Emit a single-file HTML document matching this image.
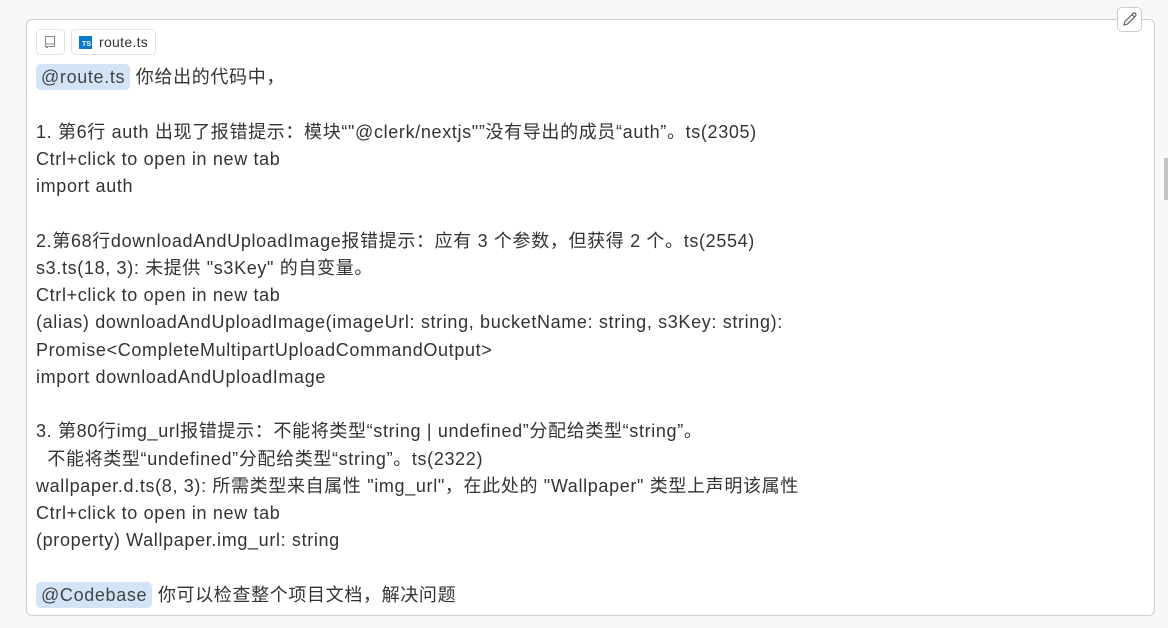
<!DOCTYPE html>
<html><head><meta charset="utf-8"><style>
html,body{margin:0;padding:0;width:1168px;height:628px;background:#f8f8f8;overflow:hidden}
.box{position:absolute;left:26px;top:19px;width:1129px;height:597px;background:#fff;border:1px solid #cfcfcf;border-radius:6px;box-sizing:border-box}
.btn{position:absolute;top:29px;height:26px;border:1px solid #e3e3e3;border-radius:4px;background:#fff;box-sizing:border-box}
.txt{position:absolute;left:36px;top:64px;font-family:"Liberation Sans","Noto Sans CJK SC",sans-serif;font-size:18px;line-height:27.25px;color:#333;white-space:pre;letter-spacing:0.65px}
.tag{background:#d4e4f8;border-radius:5px;padding:3px 5px;color:#444}
.edit{position:absolute;left:1117px;top:7px;width:25px;height:25px;border:1px solid #ccc;border-radius:5px;background:#fff;box-sizing:border-box}
.sb{position:absolute;left:1164px;top:158px;width:4px;height:42px;background:#c4c4c4}
</style></head><body>
<div class="box"></div>
<div class="btn" style="left:36px;width:29px"><svg width="27" height="24" viewBox="0 0 27 24"><rect x="8.5" y="6.5" width="9" height="10" fill="none" stroke="#888"/><line x1="8.5" y1="14" x2="17.5" y2="14" stroke="#888"/><rect x="9" y="16" width="2" height="2" fill="#888"/></svg></div>
<div class="btn" style="left:71px;width:85px"><div style="position:absolute;left:7px;top:6px;width:13px;height:13px;background:#0a7acc;color:#fff;font:bold 7px 'Liberation Sans',sans-serif;line-height:17px;text-align:right;padding-right:1px;box-sizing:border-box">TS</div><span style="position:absolute;left:27px;top:4px;font:14px 'Liberation Sans',sans-serif;color:#333;letter-spacing:0.3px">route.ts</span></div>
<div class="edit"><svg width="23" height="23" viewBox="0 0 23 23"><path d="M6 17 L7 13.5 L15 5.5 Q16.5 4.5 17.5 5.5 Q18.5 6.5 17.5 8 L9.5 16 Z M14 6.5 L16.5 9" fill="none" stroke="#555" stroke-width="1.1"/></svg></div>
<div class="sb"></div>
<div class="txt"><span class="tag">@route.ts</span> 你给出的代码中，

1. 第6行 auth 出现了报错提示：模块“"@clerk/nextjs"”没有导出的成员“auth”。ts(2305)
Ctrl+click to open in new tab
import auth

2.第68行downloadAndUploadImage报错提示：应有 3 个参数，但获得 2 个。ts(2554)
s3.ts(18, 3): 未提供 "s3Key" 的自变量。
Ctrl+click to open in new tab
(alias) downloadAndUploadImage(imageUrl: string, bucketName: string, s3Key: string):
Promise&lt;CompleteMultipartUploadCommandOutput&gt;
import downloadAndUploadImage

3. 第80行img_url报错提示：不能将类型“string | undefined”分配给类型“string”。
  不能将类型“undefined”分配给类型“string”。ts(2322)
wallpaper.d.ts(8, 3): 所需类型来自属性 "img_url"，在此处的 "Wallpaper" 类型上声明该属性
Ctrl+click to open in new tab
(property) Wallpaper.img_url: string

<span class="tag">@Codebase</span> 你可以检查整个项目文档，解决问题</div>
</body></html>
